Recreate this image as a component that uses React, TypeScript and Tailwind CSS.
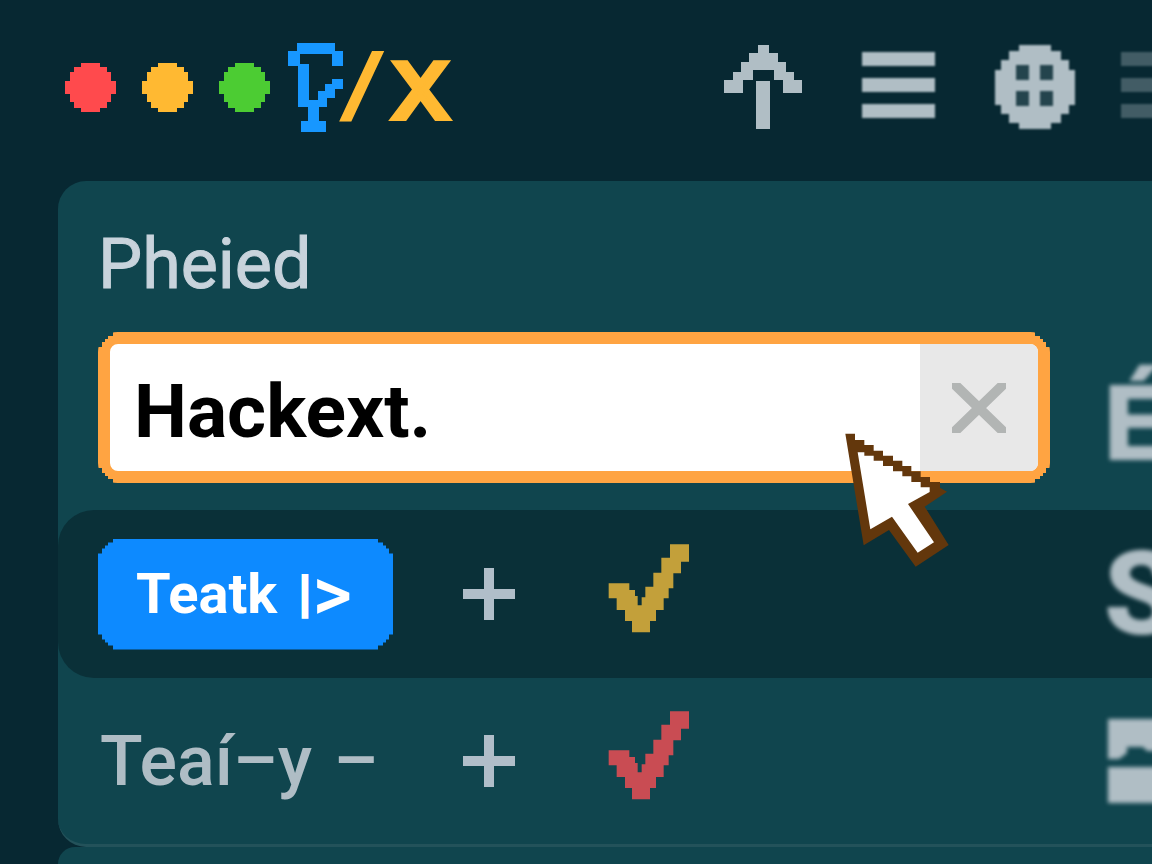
/**
 * Pixel-style search panel: title bar, text field and result rows.
 */
import { useState } from 'react';

const DOTS = [
  { label: 'Close', color: 'fill-[#ff4a4d]' },
  { label: 'Minimize', color: 'fill-[#ffb932]' },
  { label: 'Zoom', color: 'fill-[#4ccc33]' },
];

// staircase corners, 15px deep
const STEPPED =
  '[clip-path:polygon(0_15px,4px_15px,4px_10px,7px_10px,7px_7px,10px_7px,10px_4px,15px_4px,15px_0,calc(100%-15px)_0,calc(100%-15px)_4px,calc(100%-10px)_4px,calc(100%-10px)_7px,calc(100%-7px)_7px,calc(100%-7px)_10px,calc(100%-4px)_10px,calc(100%-4px)_15px,100%_15px,100%_calc(100%-15px),calc(100%-4px)_calc(100%-15px),calc(100%-4px)_calc(100%-10px),calc(100%-7px)_calc(100%-10px),calc(100%-7px)_calc(100%-7px),calc(100%-10px)_calc(100%-7px),calc(100%-10px)_calc(100%-4px),calc(100%-15px)_calc(100%-4px),calc(100%-15px)_100%,15px_100%,15px_calc(100%-4px),10px_calc(100%-4px),10px_calc(100%-7px),7px_calc(100%-7px),7px_calc(100%-10px),4px_calc(100%-10px),4px_calc(100%-15px),0_calc(100%-15px))]';

function Dot({ color }: { color: string }) {
  return (
    <svg width="51" height="49" viewBox="0 0 51 49" className={color} aria-hidden="true">
      <polygon points="16,0 35,0 35,4 42,4 42,9 46,9 46,18 51,18 51,31 46,31 46,39 42,39 42,45 35,45 35,49 16,49 16,45 9,45 9,39 5,39 5,31 0,31 0,18 5,18 5,9 9,9 9,4 16,4" />
    </svg>
  );
}

function Mark() {
  return (
    <svg width="55" height="89" viewBox="0 0 55 89" className="fill-[#1797ff]" aria-hidden="true">
      <rect x="9" y="0" width="38" height="11" />
      <rect x="0" y="8" width="12" height="15" />
      <rect x="44" y="8" width="11" height="15" />
      <rect x="10" y="21" width="11" height="43" />
      <rect x="20" y="57" width="11" height="23" />
      <rect x="30" y="48" width="9" height="16" />
      <rect x="37" y="41" width="10" height="14" />
      <rect x="44" y="36" width="11" height="10" />
      <rect x="13" y="78" width="25" height="11" />
    </svg>
  );
}

function ArrowUp() {
  return (
    <svg width="78" height="84" viewBox="0 0 78 84" className="fill-[#b0bec5]" aria-hidden="true">
      <polygon points="34,0 45,0 45,8 54,8 54,17 62,17 62,27 70,27 70,35 78,35 78,48 59,48 59,35 50,35 50,25 29,25 29,35 19,35 19,48 0,48 0,35 9,35 9,27 17,27 17,17 25,17 25,8 34,8" />
      <rect x="32" y="36" width="14" height="48" />
    </svg>
  );
}

function Bars() {
  return (
    <svg width="73" height="70" viewBox="0 0 73 70" className="overflow-visible fill-[#b0bec5] blur-[1px]" aria-hidden="true">
      <rect x="0" y="0" width="73" height="14" />
      <rect x="0" y="26" width="73" height="14" />
      <rect x="0" y="52" width="73" height="14" />
    </svg>
  );
}

function Globe() {
  return (
    <svg width="80" height="84" viewBox="0 0 80 84" className="overflow-visible blur-[1px]" aria-hidden="true">
      <polygon
        className="fill-[#b0bec5]"
        points="24,0 56,0 56,6 66,6 66,15 74,15 74,25 80,25 80,60 74,60 74,69 66,69 66,78 56,78 56,84 24,84 24,78 14,78 14,69 6,69 6,60 0,60 0,25 6,25 6,15 14,15 14,6 24,6"
      />
      <g className="fill-[#24444d]">
        <rect x="21" y="20" width="13" height="15" />
        <rect x="45" y="20" width="13" height="15" />
        <rect x="21" y="46" width="13" height="15" />
        <rect x="45" y="46" width="13" height="15" />
      </g>
    </svg>
  );
}

function Plus() {
  return (
    <svg width="52" height="52" viewBox="0 0 52 52" className="fill-[#b0bec9]" aria-hidden="true">
      <rect x="0" y="21" width="52" height="10" />
      <rect x="21" y="0" width="10" height="52" />
    </svg>
  );
}

function Check({ color }: { color: string }) {
  return (
    <svg width="82" height="89" viewBox="501 72 246 267" className={color} role="img" aria-label="Checked">
      <polygon points="503,190 565,190 565,210 582,210 582,228 590,228 590,256 602,256 602,232 613,232 613,200 637,200 637,158 661,158 661,113 687,113 687,73 744,73 744,125 720,125 720,160 697,160 697,205 683,205 683,235 668,235 668,270 645,270 645,303 627,303 627,337 573,337 573,303 552,303 552,270 527,270 527,235 503,235" />
    </svg>
  );
}

function Pointer() {
  return (
    <svg width="104" height="134" viewBox="76 369 312 402" aria-hidden="true">
      <polygon
        className="fill-[#63370c]"
        points="77,371 106,371 106,390 134,390 134,405 162,405 162,422 190,422 190,437 220,437 220,452 248,452 248,468 275,468 275,484 303,484 303,501 331,501 331,516 361,516 361,533 382,545 315,590 387,705 288,770 208,660 132,706"
      />
      <polygon
        className="fill-white"
        points="114,427 134,427 134,437 162,437 162,452 190,452 190,468 220,468 220,484 248,484 248,499 275,499 275,516 303,516 303,532 330,532 330,546 265,582 343,697 294,728 217,620 152,658"
      />
    </svg>
  );
}

export default function App() {
  const [query, setQuery] = useState('Hackext.');

  return (
    <div className="flex min-h-screen flex-col overflow-hidden bg-[#072832] font-['Roboto',sans-serif]">
      <header className="flex h-[181px] items-center pb-1.5 pl-[65px]">
        <div className="flex items-center gap-[26px]">
          {DOTS.map((dot) => (
            <button key={dot.label} type="button" aria-label={dot.label}>
              <Dot color={dot.color} />
            </button>
          ))}
        </div>
        <div className="flex items-center pl-[18px] font-['DejaVu_Sans_Mono',monospace] text-[#ffb932]">
          <Mark />
          <span className="-ml-1.5 pb-2 text-[82px] leading-[82px] font-bold [-webkit-text-stroke:3px_#ffb932]">/</span>
          <span className="pb-2 pl-1 text-[100px] leading-[82px] [-webkit-text-stroke:6px_#ffb932]">x</span>
        </div>
        <nav className="-mr-[42px] ml-auto flex shrink-0 items-center gap-[60px] pb-0.5">
          <button type="button" aria-label="Up"><ArrowUp /></button>
          <button type="button" aria-label="Menu"><Bars /></button>
          <div className="flex items-center gap-[46px]">
            <button type="button" aria-label="Apps"><Globe /></button>
            <button type="button" aria-label="More" className="opacity-35"><Bars /></button>
          </div>
        </nav>
      </header>

      <main className="flex grow flex-col pl-[58px]">
        <section className="rounded-l-[28px] border-b-[3px] border-[#23525a] bg-[#10454e]">
          <div className="pt-12 pb-[27px] pl-10">
            <label htmlFor="query" className="block text-[70px] leading-[70px] text-[#c8d3dc] [-webkit-text-stroke:1px_#c8d3dc]">
              Pheied
            </label>
            <div className="mt-[33px] flex items-center gap-[54px]">
              <div className="relative min-w-0 grow">
                <div className={`flex h-[151px] rounded-[20px] border-12 border-[#ffa442] bg-white ${STEPPED}`}>
                  <input
                    id="query"
                    type="text"
                    value={query}
                    onChange={(e) => setQuery(e.target.value)}
                    className="min-w-0 grow bg-transparent pt-2 pl-6 text-[75px] font-bold text-black outline-none"
                  />
                  <button
                    type="button"
                    aria-label="Clear"
                    onClick={() => setQuery('')}
                    className="flex w-[118px] shrink-0 items-center justify-center rounded-r-lg bg-[#e8e8e8]"
                  >
                    <svg width="54" height="50" viewBox="0 0 54 50" className="stroke-[#b2b5b4]" strokeWidth="10" aria-hidden="true">
                      <path d="M-3 -4 57 54M57 -4 -3 54" />
                    </svg>
                  </button>
                </div>
                <div className="pointer-events-none absolute top-[101px] right-[101px] z-10">
                  <Pointer />
                </div>
              </div>
              <span className="w-12 pt-8 text-[106px] leading-[106px] font-black text-[#b0bec5] blur-[2px]">É</span>
            </div>
          </div>

          <div className="flex h-[168px] items-center rounded-l-[36px] bg-[#0a3038] pl-10">
            <div className="w-[365px]">
              <button
                type="button"
                className={`flex h-[111px] w-[295px] items-center gap-5 bg-[#0d8aff] pl-[38px] text-[56px] leading-[56px] font-bold text-white ${STEPPED}`}
              >
                <span>Teatk</span>
                <span className="flex items-center">
                  <span className="font-['DejaVu_Sans',sans-serif] text-[42px] [-webkit-text-stroke:2px_white]">|</span>
                  <span className="text-[76px] font-medium">&gt;</span>
                </span>
              </button>
            </div>
            <button type="button" aria-label="Add Teatk"><Plus /></button>
            <div className="pb-3 pl-[93px]"><Check color="fill-[#c3a03a]" /></div>
            <span className="ml-auto w-12 text-[116px] leading-[116px] font-black text-[#b0bec5] blur-[2px]">S</span>
          </div>

          <div className="flex h-[166px] items-center pl-10">
            <div className="w-[365px] pl-0.5 text-[70px] leading-[70px] font-medium text-[#afbdc5]">
              Teaí–y <span className="ml-1">–</span>
            </div>
            <button type="button" aria-label="Add Teaí–y"><Plus /></button>
            <div className="pb-3 pl-[93px]"><Check color="fill-[#c94c53]" /></div>
            <svg width="45" height="84" viewBox="0 0 45 84" className="ml-auto overflow-visible blur-[2px]" aria-hidden="true">
              <path className="fill-[#b0bec5]" d="M1 0H60V32H40L36 28H20V34L12 40H1ZM1 48H60V84H1Z" />
            </svg>
          </div>
        </section>

        <section className="min-h-4 grow rounded-tl-[28px] bg-[#10454e]" />
      </main>
    </div>
  );
}
